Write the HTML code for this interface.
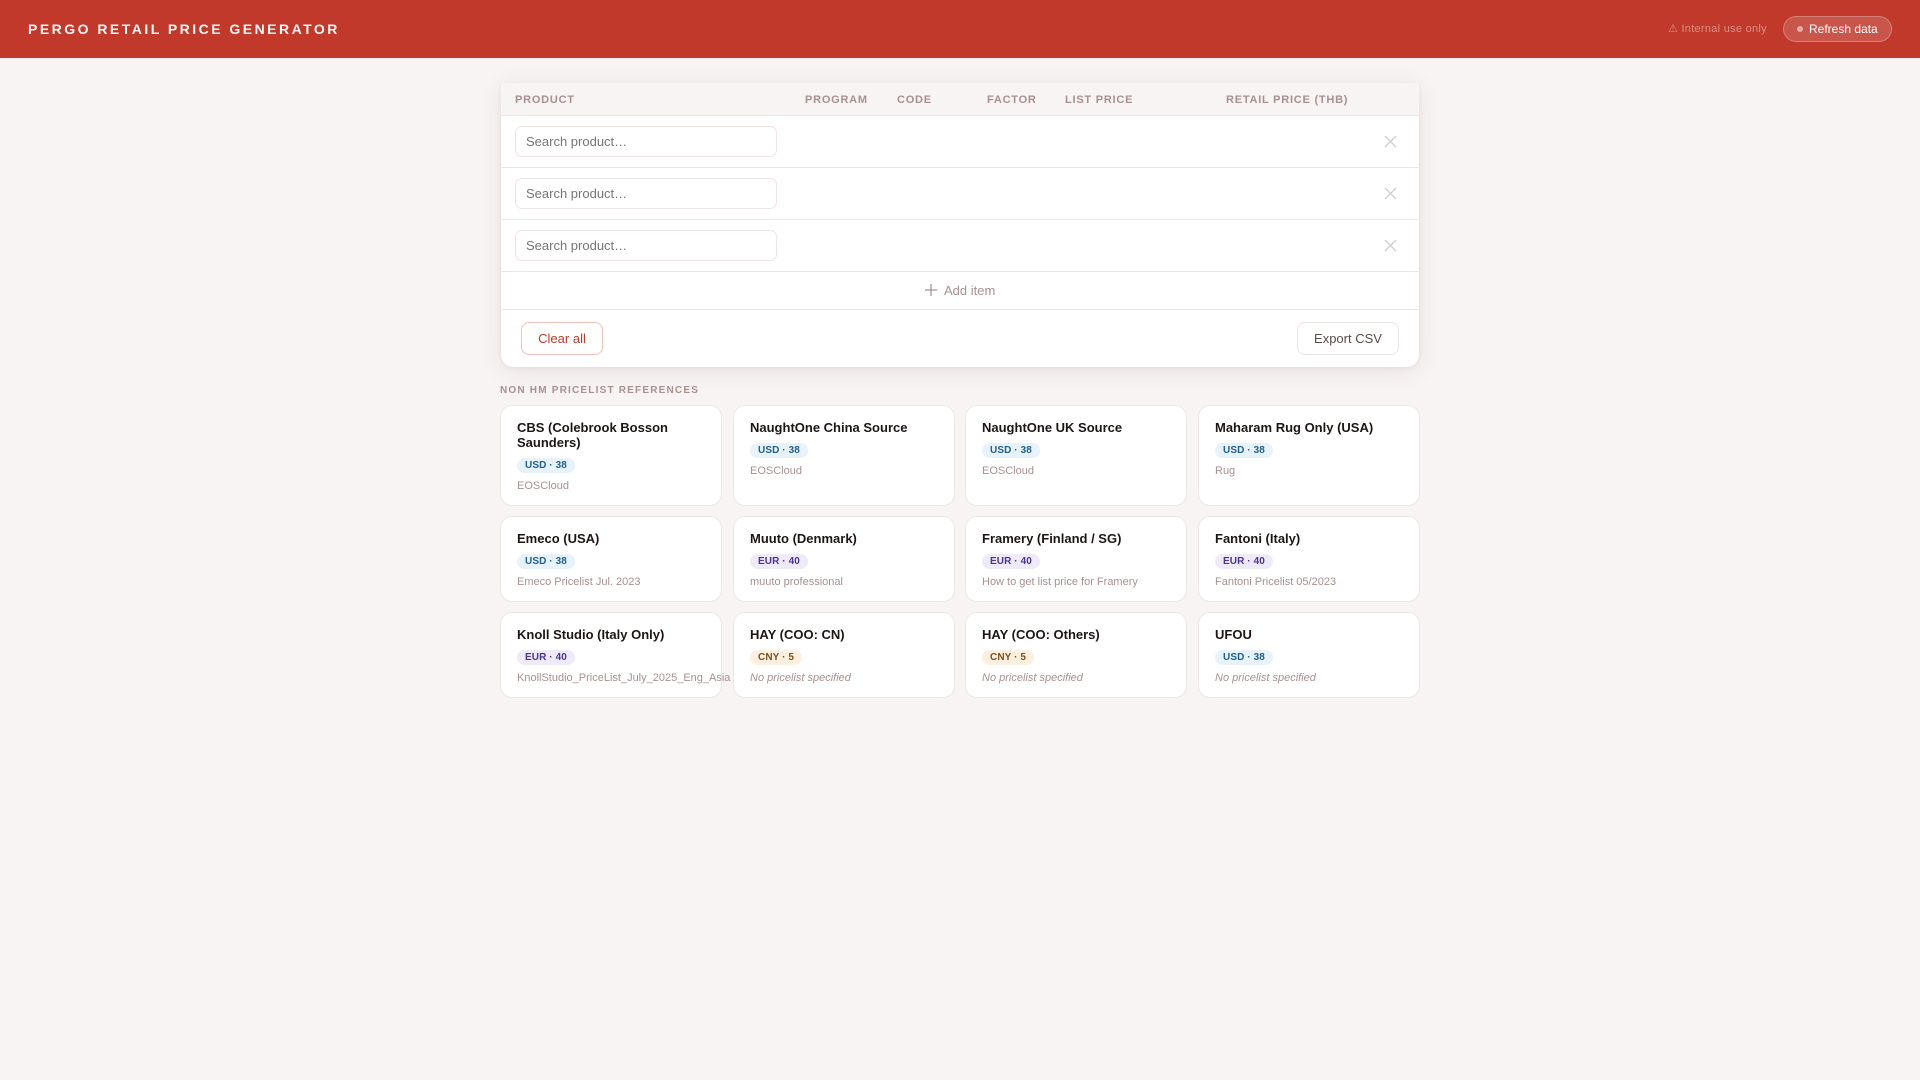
<!DOCTYPE html>
<html lang="en">
<head>
<meta charset="utf-8">
<title>Pergo Retail Price Generator</title>
<style>
*{box-sizing:border-box;margin:0;padding:0}
html,body{width:1920px;height:1080px;overflow:hidden;background:#f8f4f3;font-family:"Liberation Sans",sans-serif;color:#1e1614}
.hdr{position:absolute;left:0;top:0;width:1920px;height:58px;background:#c0392b}
.brand{position:absolute;left:28px;top:20px;font-size:14px;line-height:18px;font-weight:700;letter-spacing:2.48px;color:#fff;opacity:.95;white-space:nowrap}
.note{position:absolute;left:1668px;top:22px;font-size:11px;line-height:14px;letter-spacing:.025em;color:rgba(255,255,255,.42);white-space:nowrap}
.refresh{position:absolute;left:1783px;top:16px;width:109px;height:26px;border-radius:13px;background:rgba(255,255,255,.15);border:1px solid rgba(255,255,255,.25)}
.refresh i{position:absolute;left:13px;top:9px;width:6px;height:6px;border-radius:50%;background:rgba(255,255,255,.5)}
.refresh span{position:absolute;left:25px;top:4px;font-size:12px;line-height:16px;color:#fff;white-space:nowrap}
.panel{position:absolute;left:501px;top:83px;width:918px;height:284px;background:#fff;border-radius:0 0 12px 12px;box-shadow:0 4px 24px rgba(90,50,40,.09),0 1px 4px rgba(90,50,40,.08)}
.thead{position:absolute;left:0;top:0;width:918px;height:33px;background:#f8f4f3;border-bottom:1px solid #ece6e5}
.th{position:absolute;top:11px;font-size:11px;line-height:13px;font-weight:700;letter-spacing:.07em;color:#a89090;white-space:nowrap}
.line{position:absolute;left:0;width:918px;height:1px;background:#ece6e5}
.search{position:absolute;left:14px;width:262px;height:31px;background:#fff;border:1px solid #eee4e3;border-radius:7px;padding-left:10px;font-size:13px;line-height:29px;color:#757575;white-space:nowrap}
.x{position:absolute;left:882px;width:14px;height:14px}
.add{position:absolute;left:443px;top:200px;font-size:13px;line-height:16px;color:#a89090;white-space:nowrap}
.plus{position:absolute;left:423px;top:200px;width:14px;height:14px}
.btn{position:absolute;top:239px;height:33px;border-radius:8px;background:#fff;font-size:13px;line-height:31px;text-align:center;white-space:nowrap}
.clear{left:20px;width:82px;border:1px solid #f3c0ba;color:#c0392b}
.export{left:796px;width:102px;border:1px solid #ece4e3;color:#5a4a47}
.sect{position:absolute;left:500px;top:385px;font-size:10px;line-height:12px;font-weight:700;letter-spacing:.12em;color:#a89090;white-space:nowrap}
.card{position:absolute;width:222px;background:#fff;border:1px solid #eee6e5;border-radius:12px;padding:14px 16px 0}
.t{font-size:13px;line-height:15px;font-weight:700;color:#1e1614}
.b{display:inline-block;vertical-align:top;height:15px;margin-top:8px;padding:0 8px;border-radius:8px;font-size:10px;line-height:16px;font-weight:700;letter-spacing:.01em;white-space:nowrap}
.usd{background:#e8f2fa;color:#1f5f8b}
.eur{background:#eeeafa;color:#4a3490}
.cny{background:#fdf0e0;color:#7d4e1a}
.p{margin-top:6px;font-size:11px;line-height:15px;color:#a89090;white-space:nowrap}
.p.n{font-style:italic}
</style>
</head>
<body>
<div class="hdr">
  <div class="brand">PERGO RETAIL PRICE GENERATOR</div>
  <div class="note">⚠ Internal use only</div>
  <div class="refresh"><i></i><span>Refresh data</span></div>
</div>

<div class="panel">
  <div class="thead">
    <div class="th" style="left:14px">PRODUCT</div>
    <div class="th" style="left:304px">PROGRAM</div>
    <div class="th" style="left:396px">CODE</div>
    <div class="th" style="left:486px">FACTOR</div>
    <div class="th" style="left:564px">LIST PRICE</div>
    <div class="th" style="left:725px">RETAIL PRICE (THB)</div>
  </div>
  <div class="search" style="top:43px">Search product…</div>
  <svg class="x" style="top:51px" viewBox="0 0 14 14"><path d="M2 2L13 13M13 2L2 13" stroke="#cfcfcf" stroke-width="1.3" fill="none"/></svg>
  <div class="line" style="top:84px"></div>
  <div class="search" style="top:95px">Search product…</div>
  <svg class="x" style="top:103px" viewBox="0 0 14 14"><path d="M2 2L13 13M13 2L2 13" stroke="#cfcfcf" stroke-width="1.3" fill="none"/></svg>
  <div class="line" style="top:136px"></div>
  <div class="search" style="top:147px">Search product…</div>
  <svg class="x" style="top:155px" viewBox="0 0 14 14"><path d="M2 2L13 13M13 2L2 13" stroke="#cfcfcf" stroke-width="1.3" fill="none"/></svg>
  <div class="line" style="top:188px"></div>
  <svg class="plus" viewBox="0 0 14 14"><path d="M7 1V13M1 7H13" stroke="#a89090" stroke-width="1.3" fill="none"/></svg>
  <div class="add">Add item</div>
  <div class="line" style="top:226px"></div>
  <div class="btn clear">Clear all</div>
  <div class="btn export">Export CSV</div>
</div>

<div class="sect">NON HM PRICELIST REFERENCES</div>

<div class="card" style="left:500px;top:405px;height:101px"><div class="t">CBS (Colebrook Bosson Saunders)</div><span class="b usd">USD · 38</span><div class="p">EOSCloud</div></div>
<div class="card" style="left:733px;width:222px;top:405px;height:101px"><div class="t">NaughtOne China Source</div><span class="b usd">USD · 38</span><div class="p">EOSCloud</div></div>
<div class="card" style="left:965px;top:405px;height:101px"><div class="t">NaughtOne UK Source</div><span class="b usd">USD · 38</span><div class="p">EOSCloud</div></div>
<div class="card" style="left:1198px;top:405px;height:101px"><div class="t">Maharam Rug Only (USA)</div><span class="b usd">USD · 38</span><div class="p">Rug</div></div>

<div class="card" style="left:500px;top:516px;height:86px"><div class="t">Emeco (USA)</div><span class="b usd">USD · 38</span><div class="p">Emeco Pricelist Jul. 2023</div></div>
<div class="card" style="left:733px;top:516px;height:86px"><div class="t">Muuto (Denmark)</div><span class="b eur">EUR · 40</span><div class="p">muuto professional</div></div>
<div class="card" style="left:965px;top:516px;height:86px"><div class="t">Framery (Finland / SG)</div><span class="b eur">EUR · 40</span><div class="p">How to get list price for Framery</div></div>
<div class="card" style="left:1198px;top:516px;height:86px"><div class="t">Fantoni (Italy)</div><span class="b eur">EUR · 40</span><div class="p">Fantoni Pricelist 05/2023</div></div>

<div class="card" style="left:500px;top:612px;height:86px"><div class="t">Knoll Studio (Italy Only)</div><span class="b eur">EUR · 40</span><div class="p">KnollStudio_PriceList_July_2025_Eng_Asia</div></div>
<div class="card" style="left:733px;top:612px;height:86px"><div class="t">HAY (COO: CN)</div><span class="b cny">CNY · 5</span><div class="p n">No pricelist specified</div></div>
<div class="card" style="left:965px;top:612px;height:86px"><div class="t">HAY (COO: Others)</div><span class="b cny">CNY · 5</span><div class="p n">No pricelist specified</div></div>
<div class="card" style="left:1198px;top:612px;height:86px"><div class="t">UFOU</div><span class="b usd">USD · 38</span><div class="p n">No pricelist specified</div></div>
</body>
</html>
